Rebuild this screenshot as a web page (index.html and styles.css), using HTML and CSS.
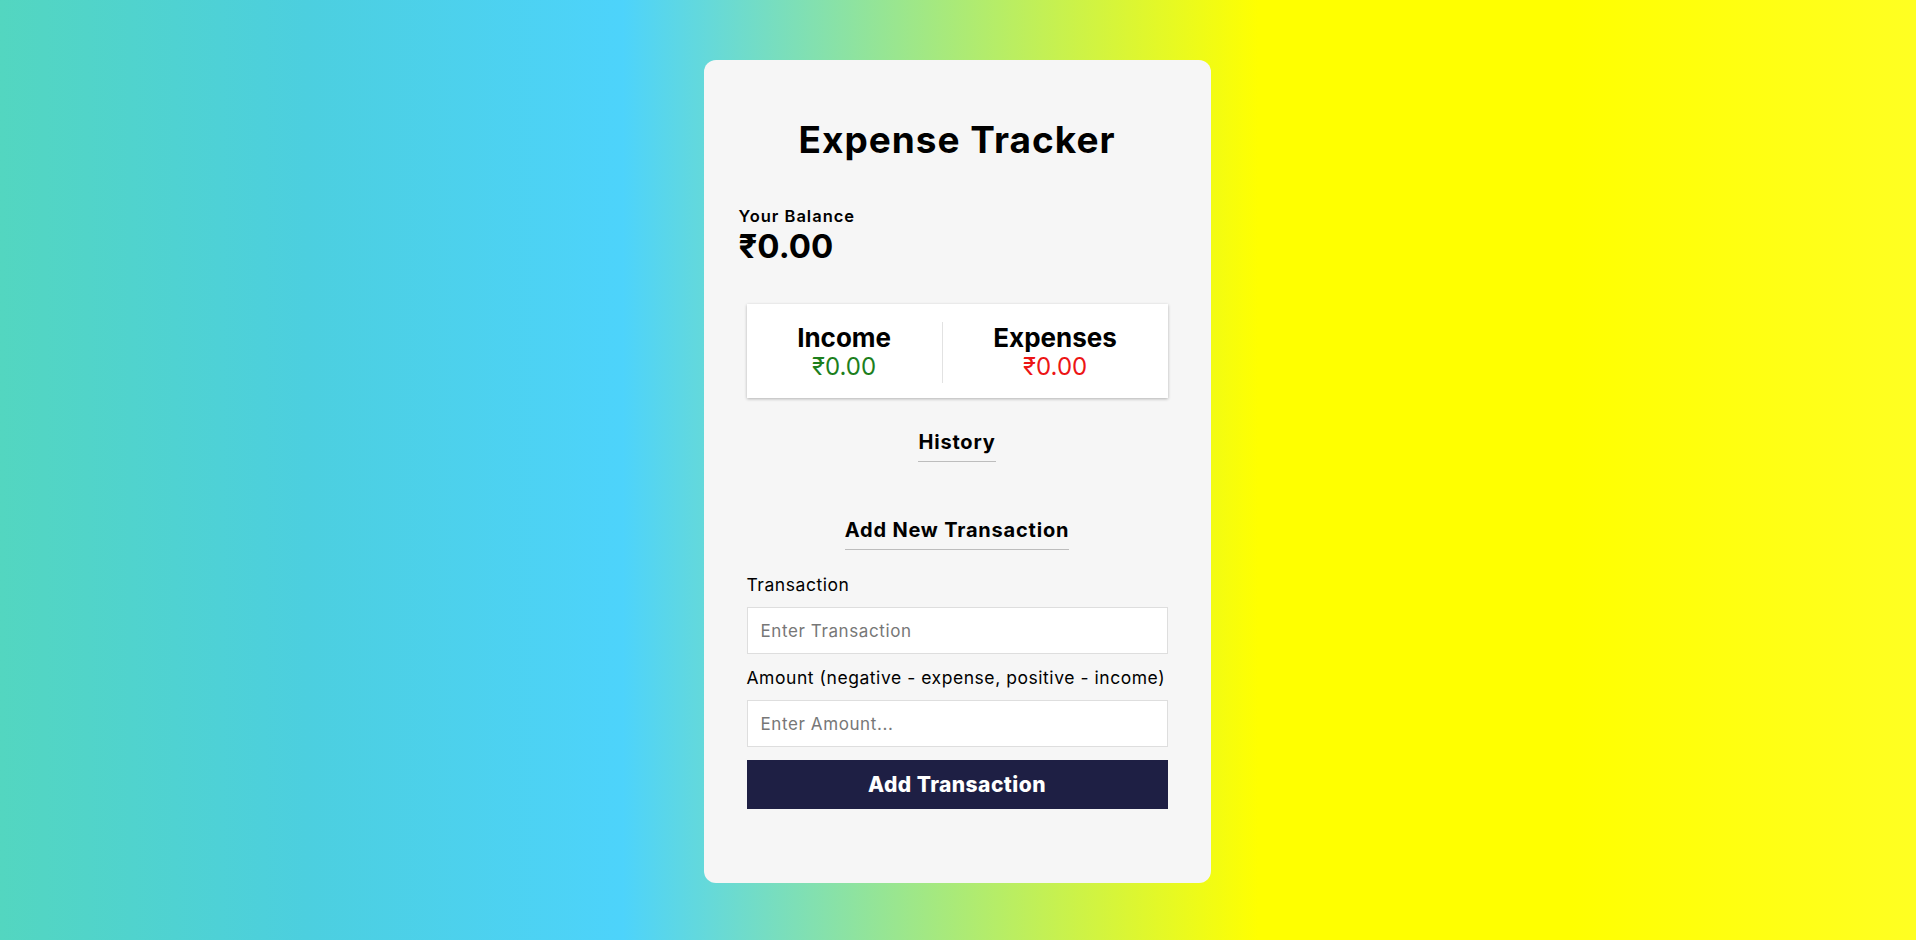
FILE: index.html
```html
<!DOCTYPE html>
<html lang="en">
<head>
<meta charset="utf-8">
<title>Expense Tracker</title>
<link rel="stylesheet" href="styles.css">
</head>
<body>
  <main class="card">
    <h1 class="title">Expense Tracker</h1>

    <section class="balance">
      <h4 class="balance-label">Your Balance</h4>
      <p class="balance-amount">₹0.00</p>
    </section>

    <section class="summary">
      <div class="summary-item summary-item--income">
        <h4 class="summary-label">Income</h4>
        <p class="summary-amount summary-amount--plus">₹0.00</p>
      </div>
      <div class="summary-item">
        <h4 class="summary-label">Expenses</h4>
        <p class="summary-amount summary-amount--minus">₹0.00</p>
      </div>
    </section>

    <section class="history">
      <h3 class="section-title">History</h3>
      <ul class="history-list"></ul>
    </section>

    <section class="add">
      <h3 class="section-title">Add New Transaction</h3>
      <form class="form">
        <label class="field-label" for="text">Transaction</label>
        <input class="field-input" id="text" type="text" placeholder="Enter Transaction">
        <label class="field-label" for="amount">Amount (negative - expense, positive - income)</label>
        <input class="field-input" id="amount" type="text" placeholder="Enter Amount...">
        <button class="btn" type="button">Add Transaction</button>
      </form>
    </section>
  </main>
</body>
</html>
```

FILE: styles.css
```css
* {
  box-sizing: border-box;
}

html, body {
  margin: 0;
  height: 100%;
}

body {
  font-family: Inter, "Open Sans", sans-serif;
  color: #000;
  background: linear-gradient(90deg, #53d6c0 0%, #4ccfdf 16%, #4dd3fb 32.5%, #ffff00 65.7%, #ffff00 82%, #ffff22 100%);
  display: flex;
  justify-content: center;
  align-items: flex-start;
  padding-top: 60px;
  overflow: hidden;
}

.card {
  width: 507px;
  margin-right: 2px;
  background: #f6f6f6;
  border-radius: 12px;
  padding: 55px 43px 74px;
}

.title {
  margin: 0;
  font-size: 37px;
  line-height: 50px;
  font-weight: 700;
  letter-spacing: 1px;
  text-align: center;
}

.balance {
  margin: 41px -8px 0;
}

.balance-label {
  margin: 0;
  font-size: 16.5px;
  line-height: 20px;
  font-weight: 600;
  letter-spacing: 1px;
}

.balance-amount {
  margin: 2px 0 0;
  font-size: 33px;
  line-height: 36px;
  font-weight: 700;
}

.summary {
  margin-top: 40px;
  background: #fff;
  display: flex;
  padding: 18px 0 15px;
  box-shadow: 0 1px 3px rgba(0, 0, 0, 0.28);
}

.summary-item {
  flex: 1 1 auto;
  text-align: center;
}

.summary-item--income {
  border-right: 1px solid #e2e2e2;
}

.summary-label {
  margin: 0;
  padding-top: 3px;
  font-size: 26px;
  line-height: 26px;
  font-weight: 700;
}

.summary-amount {
  margin: 0;
  font-size: 24px;
  line-height: 32px;
  font-weight: 400;
}

.summary-amount--plus {
  color: #1d7f1d;
}

.summary-amount--minus {
  color: #ec1515;
}

.history {
  text-align: center;
  margin-top: 32px;
}

.history-list {
  margin: 0;
  padding: 0;
  height: 56px;
  list-style: none;
}

.add {
  text-align: center;
}

.section-title {
  display: inline-block;
  margin: 0;
  font-size: 20px;
  line-height: 24px;
  font-weight: 700;
  letter-spacing: 0.8px;
  padding-bottom: 7px;
  border-bottom: 1px solid #bdbdbd;
}

.form {
  display: flex;
  flex-direction: column;
  text-align: left;
  margin-top: 23px;
}

.field-label {
  font-size: 17.5px;
  line-height: 24px;
  letter-spacing: 0.55px;
}

.field-input {
  margin: 10px 0 12px;
  height: 47px;
  border: 1px solid #dedede;
  background: #fff;
  padding: 0 13px;
  font-family: inherit;
  font-size: 17px;
  letter-spacing: 0.6px;
  color: #000;
  outline: none;
}

.field-input::placeholder {
  color: #777;
}

.btn {
  margin-top: 1px;
  height: 49px;
  border: none;
  background: #1e1f44;
  color: #fff;
  font-family: inherit;
  font-size: 21px;
  font-weight: 800;
  letter-spacing: 0.45px;
  cursor: pointer;
}
```
